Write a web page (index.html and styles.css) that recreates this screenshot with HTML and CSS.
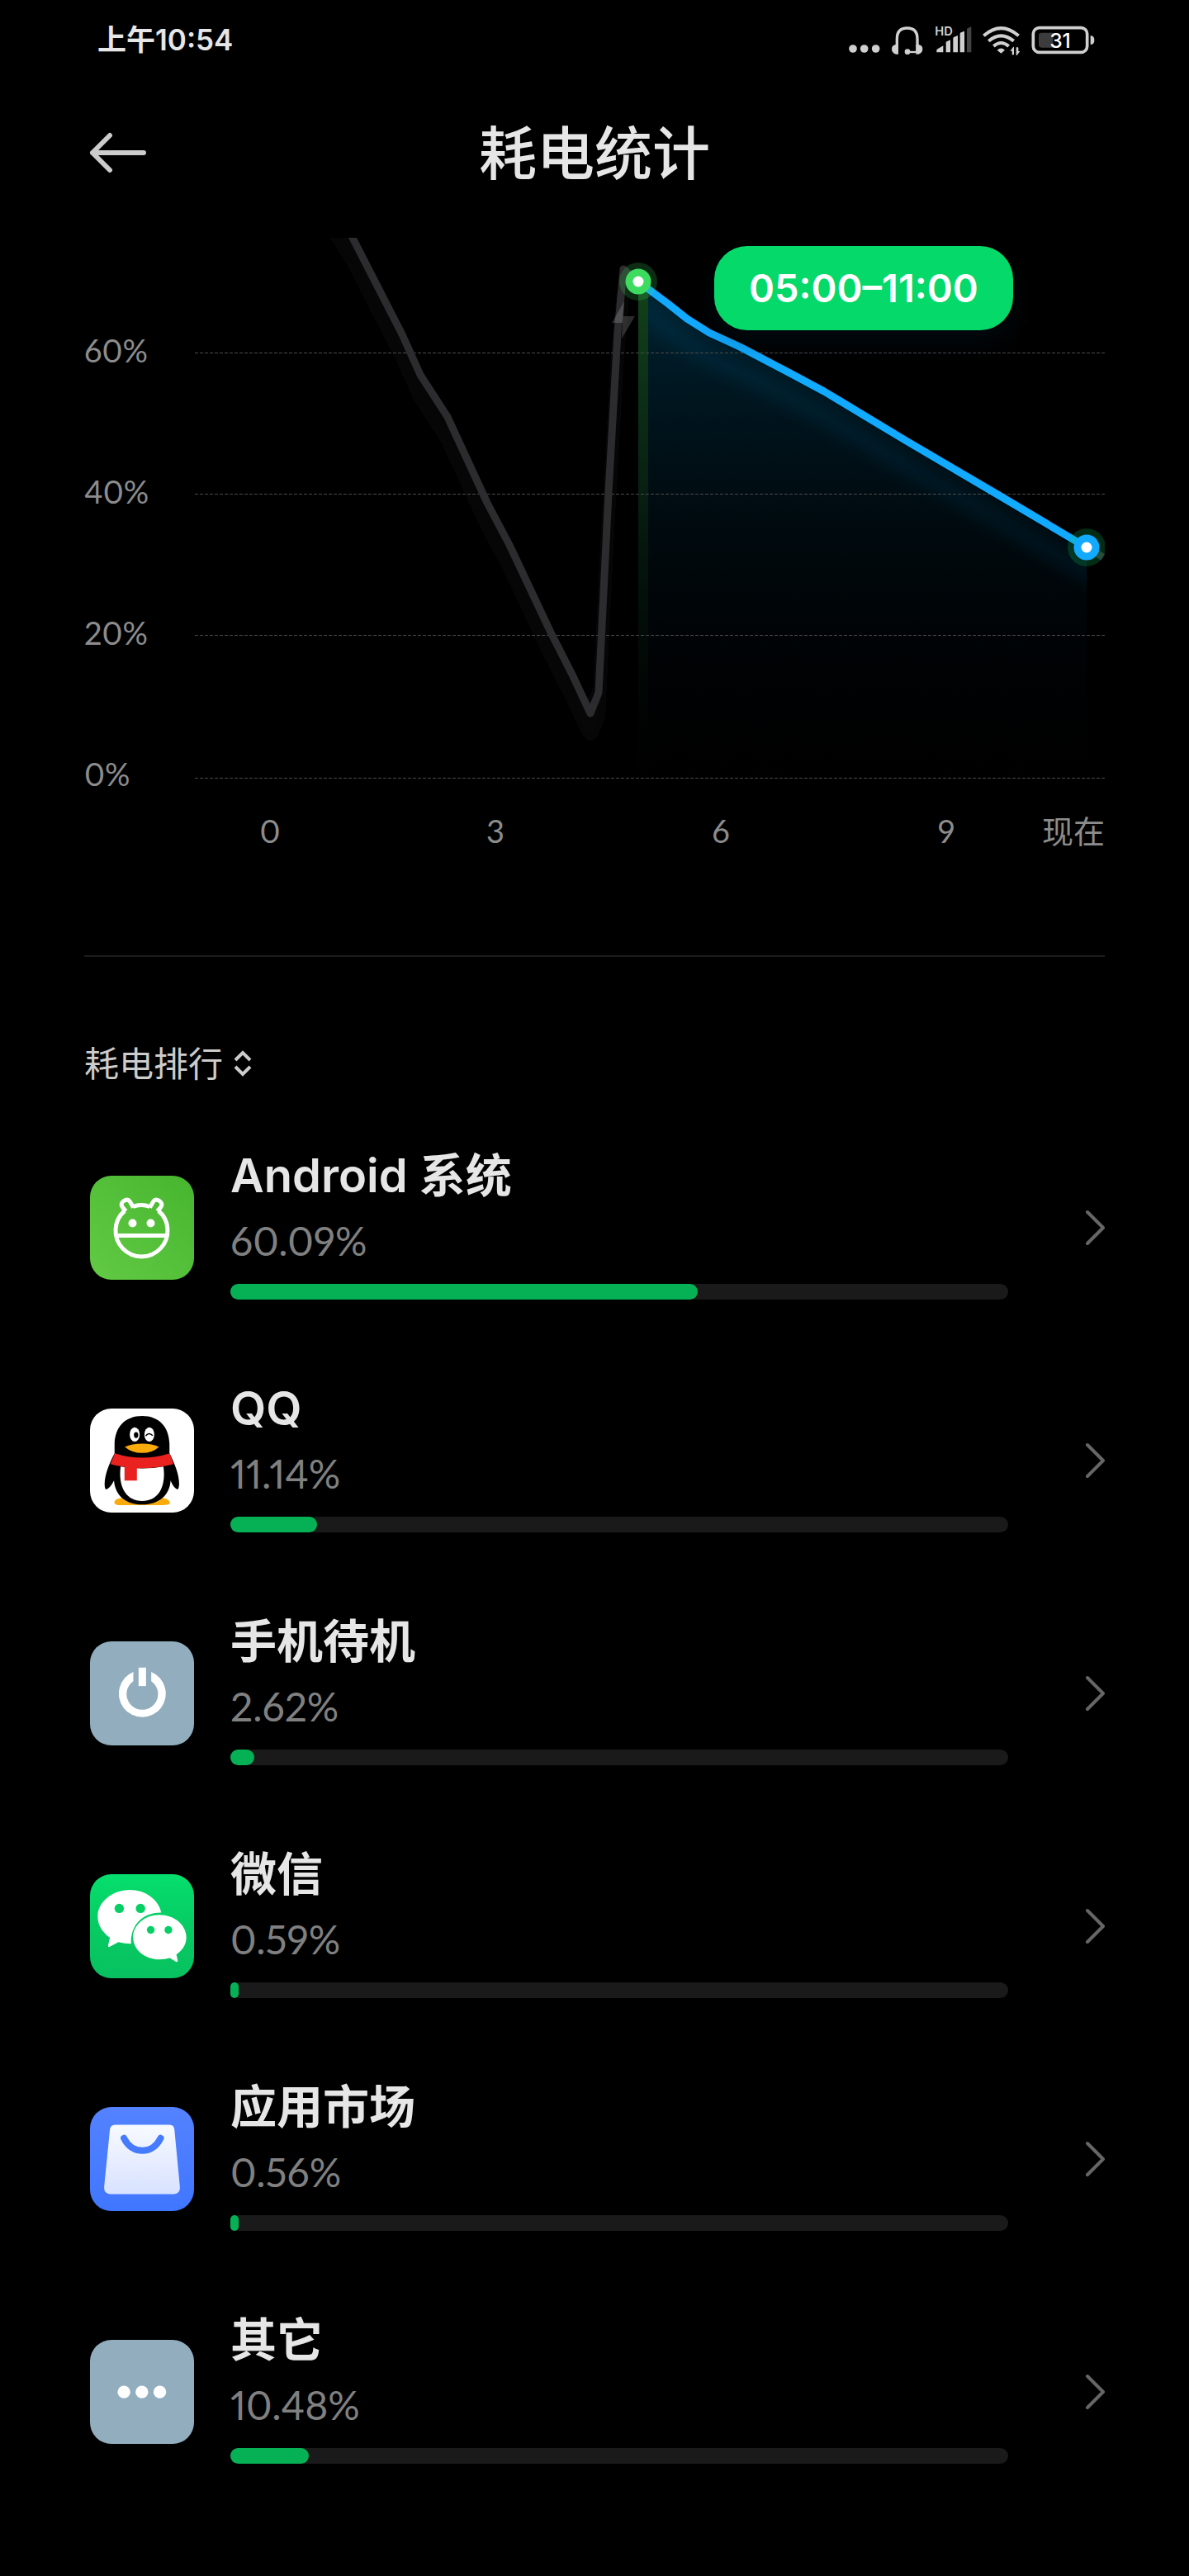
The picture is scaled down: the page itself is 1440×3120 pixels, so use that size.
FILE: index.html
```html
<!DOCTYPE html>
<html lang="zh-CN">
<head>
<meta charset="utf-8">
<meta name="viewport" content="width=device-width, initial-scale=1">
<title>耗电统计</title>
<link rel="stylesheet" href="styles.css">
</head>
<body>
<div class="status-bar">
  <span class="clock">上午10:54</span>
  <div class="status-icons">
    <svg class="st-dots" viewBox="84 55 114 114" aria-hidden="true"><g fill="#d0d0d0"><circle cx="99" cy="142" r="14.500"/><circle cx="140" cy="142" r="14.500"/><circle cx="182" cy="142" r="14.500"/></g></svg>
    <svg class="st-headset" viewBox="231 55 117 114" aria-hidden="true"><path d="M253 150V106Q253 67 290 67Q327 67 327 106V150" fill="none" stroke="#d0d0d0" stroke-width="10"/><path d="M248 127h10v35h-9q-15-4-15-19q0-13 14-16ZM332 127h-10v35h9q15-4 15-19q0-13-14-16Z" fill="#d0d0d0"/><path d="M291 154H330" stroke="#d0d0d0" stroke-width="7"/><circle cx="291" cy="153" r="10" fill="#d0d0d0"/></svg>
    <svg class="st-signal" viewBox="378 49 138 120" aria-hidden="true"><g fill="#d0d0d0"><path d="M388 155v-7q0-4 5-6l19-11v24ZM422 155v-36q0-2 3-3l13-6v45ZM448 155v-51q0-3 4-5l13-5v61ZM473 155V88q0-4 4-5l12-5v77Z"/><text class="hd-text" x="382" y="94">HD</text></g><path d="M498 155V71q0-3 4-4l12-5v93Z" fill="#444"/></svg>
    <svg class="st-wifi" viewBox="564 55 138 114" aria-hidden="true"><g fill="none" stroke="#d0d0d0" stroke-width="12"><path d="M568 95Q631 40 695 95M586 114Q631 76 677 114M604 133Q631 109 659 133"/></g><path d="M617 147Q631 134 645 147L631 159ZM676 135l-12 15h7v12q3 5 7 0v-27ZM689 166l11-15h-6v-12q-3-5-8-1v28Z" fill="#d0d0d0"/></svg>
    <svg class="st-battery" viewBox="747 55 231 114" aria-hidden="true"><rect x="754" y="66" width="196" height="89" rx="22" fill="none" stroke="#d0d0d0" stroke-width="11"/><path d="M784 84H826V138H784Q774 138 774 128V94Q774 84 784 84Z" fill="#3c3c3c"/><path d="M962 94q14 1 14 17t-14 16Z" fill="#d0d0d0"/><text class="battery-text" x="852" y="138">31</text></svg>
  </div>
</div>

<header class="title-bar">
  <button class="back" type="button" aria-label="返回"><svg viewBox="108 160 72 54"><path d="M133 166L112 187L133 208M112 187H174" fill="none" stroke="#ccc" stroke-width="6" stroke-linecap="round" stroke-linejoin="round"/></svg></button>
  <h1>耗电统计</h1>
</header>

<main>
  <figure class="chart">
    <svg viewBox="102 288 1236 750" role="img" aria-label="电量曲线">
      <defs>
        <linearGradient id="area" gradientUnits="userSpaceOnUse" x1="0" y1="341" x2="0" y2="940"><stop offset="0" stop-color="#002433"/><stop offset="1" stop-color="#000408" stop-opacity="0"/></linearGradient>
        <linearGradient id="band" gradientUnits="userSpaceOnUse" x1="0" y1="341" x2="0" y2="940"><stop offset="0" stop-color="#134219"/><stop offset="1" stop-color="#041004" stop-opacity="0"/></linearGradient>
        <filter id="soft" filterUnits="userSpaceOnUse" x="102" y="188" width="1300" height="850"><feGaussianBlur stdDeviation="10"/></filter>
        <clipPath id="span"><path d="M785 288H1316V940H785Z"/></clipPath>
      </defs>
      <path d="M773 341L832 386L859 403L896 420L957 452L998 474L1096 533L1210 600L1316 663V940H773Z" fill="url(#area)"/>
      <rect x="773" y="341" width="12" height="600" fill="url(#band)"/>
      <g clip-path="url(#span)"><path transform="translate(0 30)" d="M773 341L832 386L859 403L896 420L957 452L998 474L1096 533L1210 600L1336 675" fill="none" stroke="#12aaff" stroke-opacity=".09" stroke-width="18" filter="url(#soft)"/></g>
      <path transform="translate(0 26)" d="M380 215L427 288L487 405L509 454L542 505L590 609L617 660L667 766L693 817L715 864L725 839L737 597L748 403L755 326" fill="none" stroke="#2c2c2e" stroke-opacity=".2" stroke-width="18" filter="url(#soft)"/>
      <path class="grid-line" d="M236 427.500H1338M236 598.500H1338M236 769.500H1338M236 942.500H1338"/>
      <path d="M419 275L427 288L487 405L509 454L542 505L590 609L617 660L667 766L693 817L715 864L725 839L737 597L748 403L755 326L773 341" fill="none" stroke="#2c2c2e" stroke-width="9" stroke-linecap="round" stroke-linejoin="round"/>
      <path d="M756 365L741 391H754L753 410L769 383H755Z" fill="#fff" fill-opacity=".17"/>
      <path d="M1316 663L1336 675" stroke="#2c2c2e" stroke-width="9"/>
      <path d="M773 341L808 367L832 386L859 403L896 420L957 452L998 474L1096 533L1210 600L1316 663" fill="none" stroke="#12aaff" stroke-width="9" stroke-linejoin="round"/>
      <circle cx="773" cy="341" r="23" fill="#3ddc60" fill-opacity=".2"/><circle cx="773" cy="341" r="15.500" fill="#3ddc60"/><circle cx="773" cy="341" r="6.500" fill="#fff"/>
      <circle cx="1316" cy="663" r="23" fill="#08c860" fill-opacity=".22"/><circle cx="1316" cy="663" r="15.500" fill="#12aaff"/><circle cx="1316" cy="663" r="6.500" fill="#fff"/>
      <g class="axis"><text x="102" y="439">60%</text><text x="102" y="610">40%</text><text x="102" y="781">20%</text><text x="102" y="952">0%</text></g>
      <g class="axis axis-x"><text x="327" y="1021">0</text><text x="600" y="1021">3</text><text x="873" y="1021">6</text><text x="1146" y="1021">9</text></g>
      <g class="axis axis-end"><text x="1338" y="1021">现在</text></g>
    </svg>
    <figcaption class="range">05:00–11:00</figcaption>
  </figure>

  <section class="ranking">
    <button class="sort" type="button">耗电排行<svg viewBox="0 0 24 32"><path d="M3 12L12 3L21 12M3 20L12 29L21 20" fill="none" stroke="#ccc" stroke-width="4"/></svg></button>
    <ul class="apps">
      <li><a class="app" href="#android">
        <svg class="icon icon-android" viewBox="0 0 126 126"><g fill="none" stroke="#fff" stroke-width="5"><path d="M42 42.500A31.500 31.500 0 1 0 83 42.500M52 37.500Q62 33.500 72.500 37.500" /><path d="M43.500 43L39.500 38.500Q36 34 41 30.500Q45.500 27.500 48.500 31.500L52.500 38.500M81.500 43L85.500 38.500Q89 34 84 30.500Q79.500 27.500 76.500 31.500L72.500 38.500" stroke-linejoin="round"/><path d="M32 72.500H93"/></g><circle cx="51.500" cy="57.500" r="5" fill="#fff"/><circle cx="73.500" cy="57.500" r="5" fill="#fff"/></svg>
        <span class="info"><span class="name">Android 系统</span><span class="percent">60.09%</span><span class="bar"><span class="fill" style="width:60.09%"></span></span></span>
        <svg class="chevron" viewBox="0 0 28 44"><path d="M7 3L26 22L7 41"/></svg></a></li>
      <li><a class="app" href="#qq">
        <svg class="icon icon-qq" viewBox="58 78 377 377"><path d="M146 418Q148 405 172 402H322Q346 406 348 420Q348 428 320 428H170Q146 428 146 418Z" fill="#faab0c"/><path d="M147 240V205C149 145 185 105 247 105C309 105 344 145 346 205V240C365 275 381 320 381 350Q381 365 376 371Q362 368 350 339C347 390 310 426 247 426C184 426 149 390 145 339Q130 368 116 371Q111 368 111 350C111 320 128 275 147 240Z" fill="#000"/><path d="M169 288Q247 302 324 288C334 355 310 413 247 413C184 413 160 355 169 288Z" fill="#fff"/><ellipse cx="220" cy="172" rx="18" ry="26" fill="#fff"/><ellipse cx="273" cy="172" rx="18" ry="26" fill="#fff"/><ellipse cx="225" cy="174" rx="8" ry="11" fill="#000"/><path d="M260 177Q272 162 285 176" fill="none" stroke="#000" stroke-width="5"/><path d="M184 217Q210 205 247 205Q284 205 308 217Q284 239 247 239Q210 239 184 217Z" fill="#faab0c"/><path d="M148 240Q247 272 347 240L361 279Q300 296 228 294V339H183V289Q155 287 132 279Z" fill="#e9211f"/></svg>
        <span class="info"><span class="name">QQ</span><span class="percent">11.14%</span><span class="bar"><span class="fill" style="width:11.14%"></span></span></span>
        <svg class="chevron" viewBox="0 0 28 44"><path d="M7 3L26 22L7 41"/></svg></a></li>
      <li><a class="app" href="#standby">
        <svg class="icon icon-grey" viewBox="58 84 377 377"><path d="M215 195V228A57 57 0 1 0 280 228V195A85 85 0 1 1 215 195Z" fill="#fff"/><rect x="234" y="179" width="27" height="67" fill="#fff"/></svg>
        <span class="info"><span class="name">手机待机</span><span class="percent">2.62%</span><span class="bar"><span class="fill" style="width:3.1%"></span></span></span>
        <svg class="chevron" viewBox="0 0 28 44"><path d="M7 3L26 22L7 41"/></svg></a></li>
      <li><a class="app" href="#wechat">
        <svg class="icon icon-wechat" viewBox="58 90 377 377"><path d="M86 243C86 190 140 147 202 147C260 147 307 183 316 229C255 228 204 268 207 342Q184 342 161 336L127 354Q122 354 124 347L130 320C103 300 86 274 86 243Z" fill="#fff"/><path d="M310 237C364 237 407 274 407 318C407 346 393 365 371 381L376 403Q376 409 371 408L347 394Q330 399 310 399C257 399 214 363 214 318C214 273 257 237 310 237Z" fill="#fff"/><g fill="#06cf63"><circle cx="164" cy="214" r="17"/><circle cx="241" cy="214" r="17"/><circle cx="278" cy="292" r="14"/><circle cx="342" cy="292" r="14"/></g></svg>
        <span class="info"><span class="name">微信</span><span class="percent">0.59%</span><span class="bar"><span class="fill" style="width:0.59%"></span></span></span>
        <svg class="chevron" viewBox="0 0 28 44"><path d="M7 3L26 22L7 41"/></svg></a></li>
      <li><a class="app" href="#market">
        <svg class="icon icon-market" viewBox="58 96 377 377"><defs><linearGradient id="bag" x1="0" y1="0" x2="0" y2="1"><stop offset="0" stop-color="#f8faff"/><stop offset="1" stop-color="#d8e2ff"/></linearGradient></defs><path d="M149 160H346Q363 160 364 178L384 388Q384 410 362 412H131Q109 410 109 388L130 178Q132 160 149 160Z" fill="url(#bag)"/><path d="M181 209Q204 254 248 254Q291 254 314 209" fill="none" stroke="#467bff" stroke-width="24" stroke-linecap="round"/></svg>
        <span class="info"><span class="name">应用市场</span><span class="percent">0.56%</span><span class="bar"><span class="fill" style="width:0.56%"></span></span></span>
        <svg class="chevron" viewBox="0 0 28 44"><path d="M7 3L26 22L7 41"/></svg></a></li>
      <li><a class="app" href="#other">
        <svg class="icon icon-grey" viewBox="58 102 377 377"><g fill="#fff"><circle cx="181" cy="291" r="23"/><circle cx="246" cy="291" r="23"/><circle cx="311" cy="291" r="23"/></g></svg>
        <span class="info"><span class="name">其它</span><span class="percent">10.48%</span><span class="bar"><span class="fill" style="width:10.1%"></span></span></span>
        <svg class="chevron" viewBox="0 0 28 44"><path d="M7 3L26 22L7 41"/></svg></a></li>
    </ul>
  </section>
</main>
</body>
</html>
```
FILE: styles.css
```css
* { box-sizing: border-box; }

body {
  margin: 0;
  background: #000;
  color: #e6e6e6;
  font-family: Lato, "Noto Sans CJK SC", sans-serif;
  font-variant-numeric: proportional-nums;
}

svg { display: block; }

button {
  border: 0;
  padding: 0;
  background: none;
  color: inherit;
  font: inherit;
}

.status-bar {
  display: flex;
  align-items: center;
  justify-content: space-between;
  height: 96px;
  padding: 0 114px 0 118px;
}

.clock {
  font-family: Inter, "Noto Sans CJK SC", sans-serif;
  font-size: 35px;
  font-weight: 600;
  line-height: 52px;
}

.status-icons { display: flex; align-items: flex-end; gap: 13px; }
.status-icons svg { height: 38px; }
.st-dots { width: 38px; }
.st-headset { width: 39px; }
.status-icons .st-signal { width: 46px; height: 40px; }
.st-wifi { width: 46px; }
.st-battery { width: 77px; }

.hd-text { font: 600 44px Inter, sans-serif; }
.battery-text {
  fill: #fff;
  font: 500 74px Inter, sans-serif;
  text-anchor: middle;
}

.title-bar {
  display: grid;
  grid-template-columns: 72px 1fr 72px;
  align-items: center;
  height: 178px;
  padding: 0 108px;
}

.back svg { width: 72px; height: 54px; }

h1 {
  margin: 0;
  font-size: 70px;
  font-weight: 500;
  line-height: 100px;
  text-align: center;
}

main { padding: 14px 102px 0; }

.chart {
  position: relative;
  margin: 0;
  padding-bottom: 119px;
  border-bottom: 2px solid #1c1c1c;
}

.chart svg { width: 100%; }

.grid-line {
  stroke: #4a4a4a;
  stroke-dasharray: 4 2;
}

.axis { fill: #8c8c8c; font-size: 38px; }
.axis-x { text-anchor: middle; }
.axis-end { text-anchor: end; }

.range {
  position: absolute;
  top: 10px;
  right: 9%;
  padding: 21px 42px;
  border-radius: 40px;
  background: #05d969;
  box-shadow: 0 16px 30px #04203a44;
  color: #fff;
  font-family: Inter, sans-serif;
  font-size: 47px;
  font-weight: 600;
  line-height: 60px;
}

.sort {
  display: flex;
  align-items: center;
  gap: 12px;
  margin: 100px 0 29px;
  color: #ccc;
  font-size: 42px;
  line-height: 58px;
}

.sort svg { width: 24px; height: 32px; }

.apps { margin: 0; padding: 0; list-style: none; }

.app {
  display: flex;
  align-items: center;
  height: 282px;
  padding-left: 7px;
  color: inherit;
  text-decoration: none;
}

.icon { flex: none; width: 126px; height: 126px; border-radius: 26px; }
.icon-android { background: linear-gradient(45deg, #62ca45, #47b52f); }
.icon-qq { background: #fff; }
.icon-grey { background: #91adbe; }
.icon-wechat { background: linear-gradient(#05df6d, #07cb63 50%, #08c160); }
.icon-market { background: linear-gradient(#5482ff, #4076ff); }

.info {
  display: flex;
  flex: 1;
  flex-direction: column;
  margin: 0 89px 0 44px;
  padding-bottom: 12px;
}

.name {
  font-family: Inter, "Noto Sans CJK SC", sans-serif;
  font-size: 56px;
  font-weight: 600;
  line-height: 70px;
}

.percent { margin-top: 16px; color: #808080; font-size: 48px; line-height: 56px; }

.bar {
  height: 19px;
  margin-top: 24px;
  border-radius: 10px;
  background: #1a1a1a;
}

.fill {
  display: block;
  min-width: 10px;
  height: 100%;
  border-radius: 10px;
  background: #06b156;
}

.chevron {
  flex: none;
  width: 28px;
  height: 44px;
  fill: none;
  stroke: #666;
  stroke-width: 4px;
  stroke-linecap: round;
  stroke-linejoin: round;
}
```
